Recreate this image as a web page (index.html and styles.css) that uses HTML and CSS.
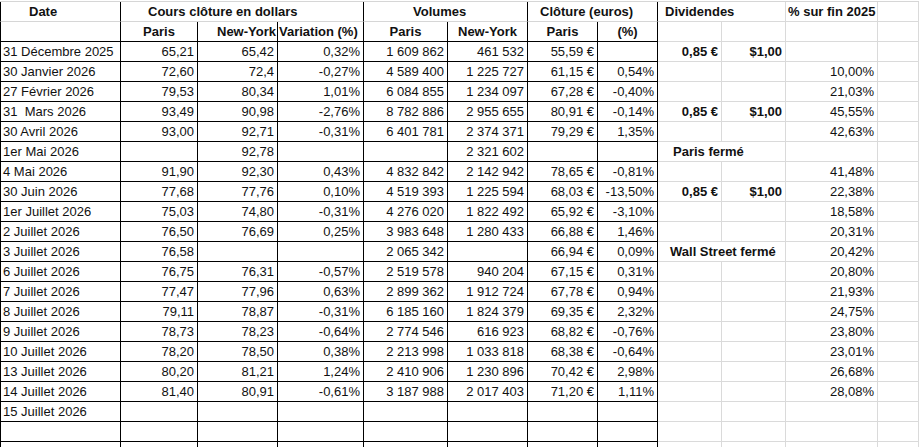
FILE: index.html
```html
<!DOCTYPE html>
<html lang="fr">
<head>
<meta charset="utf-8">
<title>Cours</title>
<link rel="stylesheet" href="styles.css">
</head>
<body>
<div class="sheet">
  <!-- header row 1 -->
  <div class="c l b hb pad-date">Date</div>
  <div class="c b hb s3 pad-cours">Cours clôture en dollars</div>
  <div class="c b hb s2 pad-vol">Volumes</div>
  <div class="c b hb s2 pad-clo">Clôture (euros)</div>
  <div class="g b s2 pad-div">Dividendes</div>
  <div class="g b pad-pct">% sur fin 2025</div>
  <div class="g"></div>
  <!-- header row 2 -->
  <div class="c l"></div>
  <div class="c b m">Paris</div>
  <div class="c b n tight">New-York</div>
  <div class="c b tight">Variation (%)</div>
  <div class="c b m">Paris</div>
  <div class="c b m">New-York</div>
  <div class="c b m">Paris</div>
  <div class="c b m">(%)</div>
  <div class="g"></div><div class="g"></div><div class="g"></div><div class="g"></div>

  <div class="c l">31 Décembre 2025</div><div class="c n">65,21</div><div class="c n">65,42</div><div class="c n">0,32%</div><div class="c n">1 609 862</div><div class="c n">461 532</div><div class="c n">55,59 €</div><div class="c n"></div>
  <div class="g n b">0,85 €</div><div class="g n b">$1,00</div><div class="g n"></div><div class="g"></div>

  <div class="c l">30 Janvier 2026</div><div class="c n">72,60</div><div class="c n">72,4</div><div class="c n">-0,27%</div><div class="c n">4 589 400</div><div class="c n">1 225 727</div><div class="c n">61,15 €</div><div class="c n">0,54%</div>
  <div class="g"></div><div class="g"></div><div class="g n">10,00%</div><div class="g"></div>

  <div class="c l">27 Février 2026</div><div class="c n">79,53</div><div class="c n">80,34</div><div class="c n">1,01%</div><div class="c n">6 084 855</div><div class="c n">1 234 097</div><div class="c n">67,28 €</div><div class="c n">-0,40%</div>
  <div class="g"></div><div class="g"></div><div class="g n">21,03%</div><div class="g"></div>

  <div class="c l">31&nbsp; Mars 2026</div><div class="c n">93,49</div><div class="c n">90,98</div><div class="c n">-2,76%</div><div class="c n">8 782 886</div><div class="c n">2 955 655</div><div class="c n">80,91 €</div><div class="c n">-0,14%</div>
  <div class="g n b">0,85 €</div><div class="g n b">$1,00</div><div class="g n">45,55%</div><div class="g"></div>

  <div class="c l">30 Avril 2026</div><div class="c n">93,00</div><div class="c n">92,71</div><div class="c n">-0,31%</div><div class="c n">6 401 781</div><div class="c n">2 374 371</div><div class="c n">79,29 €</div><div class="c n">1,35%</div>
  <div class="g"></div><div class="g"></div><div class="g n">42,63%</div><div class="g"></div>

  <div class="c l">1er Mai 2026</div><div class="c n"></div><div class="c n">92,78</div><div class="c n"></div><div class="c n"></div><div class="c n">2 321 602</div><div class="c n"></div><div class="c n"></div>
  <div class="g b s2 pad-paris">Paris fermé</div><div class="g n"></div><div class="g"></div>

  <div class="c l">4 Mai 2026</div><div class="c n">91,90</div><div class="c n">92,30</div><div class="c n">0,43%</div><div class="c n">4 832 842</div><div class="c n">2 142 942</div><div class="c n">78,65 €</div><div class="c n">-0,81%</div>
  <div class="g"></div><div class="g"></div><div class="g n">41,48%</div><div class="g"></div>

  <div class="c l">30 Juin 2026</div><div class="c n">77,68</div><div class="c n">77,76</div><div class="c n">0,10%</div><div class="c n">4 519 393</div><div class="c n">1 225 594</div><div class="c n">68,03 €</div><div class="c n">-13,50%</div>
  <div class="g n b">0,85 €</div><div class="g n b">$1,00</div><div class="g n">22,38%</div><div class="g"></div>

  <div class="c l">1er Juillet 2026</div><div class="c n">75,03</div><div class="c n">74,80</div><div class="c n">-0,31%</div><div class="c n">4 276 020</div><div class="c n">1 822 492</div><div class="c n">65,92 €</div><div class="c n">-3,10%</div>
  <div class="g"></div><div class="g"></div><div class="g n">18,58%</div><div class="g"></div>

  <div class="c l">2 Juillet 2026</div><div class="c n">76,50</div><div class="c n">76,69</div><div class="c n">0,25%</div><div class="c n">3 983 648</div><div class="c n">1 280 433</div><div class="c n">66,88 €</div><div class="c n">1,46%</div>
  <div class="g"></div><div class="g"></div><div class="g n">20,31%</div><div class="g"></div>

  <div class="c l">3 Juillet 2026</div><div class="c n">76,58</div><div class="c n"></div><div class="c n"></div><div class="c n">2 065 342</div><div class="c n"></div><div class="c n">66,94 €</div><div class="c n">0,09%</div>
  <div class="g b s2 pad-ws">Wall Street fermé</div><div class="g n">20,42%</div><div class="g"></div>

  <div class="c l">6 Juillet 2026</div><div class="c n">76,75</div><div class="c n">76,31</div><div class="c n">-0,57%</div><div class="c n">2 519 578</div><div class="c n">940 204</div><div class="c n">67,15 €</div><div class="c n">0,31%</div>
  <div class="g"></div><div class="g"></div><div class="g n">20,80%</div><div class="g"></div>

  <div class="c l">7 Juillet 2026</div><div class="c n">77,47</div><div class="c n">77,96</div><div class="c n">0,63%</div><div class="c n">2 899 362</div><div class="c n">1 912 724</div><div class="c n">67,78 €</div><div class="c n">0,94%</div>
  <div class="g"></div><div class="g"></div><div class="g n">21,93%</div><div class="g"></div>

  <div class="c l">8 Juillet 2026</div><div class="c n">79,11</div><div class="c n">78,87</div><div class="c n">-0,31%</div><div class="c n">6 185 160</div><div class="c n">1 824 379</div><div class="c n">69,35 €</div><div class="c n">2,32%</div>
  <div class="g"></div><div class="g"></div><div class="g n">24,75%</div><div class="g"></div>

  <div class="c l">9 Juillet 2026</div><div class="c n">78,73</div><div class="c n">78,23</div><div class="c n">-0,64%</div><div class="c n">2 774 546</div><div class="c n">616 923</div><div class="c n">68,82 €</div><div class="c n">-0,76%</div>
  <div class="g"></div><div class="g"></div><div class="g n">23,80%</div><div class="g"></div>

  <div class="c l">10 Juillet 2026</div><div class="c n">78,20</div><div class="c n">78,50</div><div class="c n">0,38%</div><div class="c n">2 213 998</div><div class="c n">1 033 818</div><div class="c n">68,38 €</div><div class="c n">-0,64%</div>
  <div class="g"></div><div class="g"></div><div class="g n">23,01%</div><div class="g"></div>

  <div class="c l">13 Juillet 2026</div><div class="c n">80,20</div><div class="c n">81,21</div><div class="c n">1,24%</div><div class="c n">2 410 906</div><div class="c n">1 230 896</div><div class="c n">70,42 €</div><div class="c n">2,98%</div>
  <div class="g"></div><div class="g"></div><div class="g n">26,68%</div><div class="g"></div>

  <div class="c l">14 Juillet 2026</div><div class="c n">81,40</div><div class="c n">80,91</div><div class="c n">-0,61%</div><div class="c n">3 187 988</div><div class="c n">2 017 403</div><div class="c n">71,20 €</div><div class="c n">1,11%</div>
  <div class="g"></div><div class="g"></div><div class="g n">28,08%</div><div class="g"></div>

  <div class="c l">15 Juillet 2026</div><div class="c"></div><div class="c"></div><div class="c"></div><div class="c"></div><div class="c"></div><div class="c"></div><div class="c"></div>
  <div class="g"></div><div class="g"></div><div class="g"></div><div class="g"></div>

  <div class="c l"></div><div class="c"></div><div class="c"></div><div class="c"></div><div class="c"></div><div class="c"></div><div class="c"></div><div class="c"></div>
  <div class="g"></div><div class="g"></div><div class="g"></div><div class="g"></div>

  <div class="c l"></div><div class="c"></div><div class="c"></div><div class="c"></div><div class="c"></div><div class="c"></div><div class="c"></div><div class="c"></div>
  <div class="g"></div><div class="g"></div><div class="g"></div><div class="g"></div>
</div>
</body>
</html>
```
FILE: styles.css
```css
html, body {
  margin: 0;
  padding: 0;
  background: #ffffff;
  overflow: hidden;
}

body {
  font-family: "Liberation Sans", Arial, sans-serif;
  font-size: 13px;
  color: #111111;
}

.sheet {
  margin-top: 1px;
  border-top: 1px solid #d6d6d6;
  display: grid;
  grid-template-columns: 121px 77px 80px 86px 84px 80px 70px 60px 64px 64px 92px 41px;
  grid-auto-rows: 20px;
  width: 919px;
}

.c, .g {
  box-sizing: border-box;
  height: 20px;
  line-height: 19px;
  padding: 0 3px;
  white-space: nowrap;
  overflow: hidden;
}

.c {
  border-right: 1px solid #000000;
  border-bottom: 1px solid #000000;
}

.g {
  border-right: 1px solid #dadada;
  border-bottom: 1px solid #dadada;
}

.l {
  border-left: 1px solid #000000;
  padding-left: 2px;
}

.hb {
  border-bottom-color: #d6d6d6;
}

.b { font-weight: bold; }
.n { text-align: right; }
.m { text-align: center; }
.tight { padding: 0 1px; }

.s2 { grid-column: span 2; }
.s3 { grid-column: span 3; }

.pad-date { padding-left: 28px; }
.pad-cours { padding-left: 27px; }
.pad-vol { padding-left: 49px; }
.pad-clo { padding-left: 12px; }
.pad-div { padding-left: 7px; }
.pad-pct { padding-left: 2px; }
.pad-paris { padding-left: 15px; }
.pad-ws { padding-left: 12px; }
```
